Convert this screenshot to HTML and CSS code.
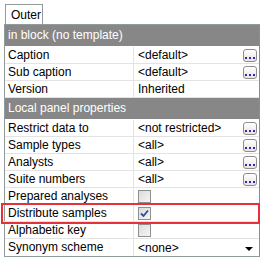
FILE: index.html
```html
<!DOCTYPE html>
<html lang="en">
  <head>
    <meta charset="UTF-8">
    <title>Outer</title>
    <link rel="stylesheet" href="styles.css">
  </head>
  <body>
    <div class="frame">
      <div class="tabs">
        <span class="tab">Outer</span>
      </div>
      <div class="panel">
        <div class="group">in block (no template)</div>
        <div class="row">
          <span class="label">Caption</span>
          <span class="value">&lt;default&gt;<span class="more"><svg width="10" height="3" viewBox="0 0 10 3"><rect x="0" y="0" width="2" height="2"/><rect x="4" y="0" width="2" height="2"/><rect x="8" y="0" width="2" height="2"/></svg></span></span>
        </div>
        <div class="row">
          <span class="label">Sub caption</span>
          <span class="value">&lt;default&gt;<span class="more"><svg width="10" height="3" viewBox="0 0 10 3"><rect x="0" y="0" width="2" height="2"/><rect x="4" y="0" width="2" height="2"/><rect x="8" y="0" width="2" height="2"/></svg></span></span>
        </div>
        <div class="row">
          <span class="label">Version</span>
          <span class="value">Inherited</span>
        </div>
        <div class="group">Local panel properties</div>
        <div class="row">
          <span class="label">Restrict data to</span>
          <span class="value">&lt;not restricted&gt;<span class="more"><svg width="10" height="3" viewBox="0 0 10 3"><rect x="0" y="0" width="2" height="2"/><rect x="4" y="0" width="2" height="2"/><rect x="8" y="0" width="2" height="2"/></svg></span></span>
        </div>
        <div class="row">
          <span class="label">Sample types</span>
          <span class="value">&lt;all&gt;<span class="more"><svg width="10" height="3" viewBox="0 0 10 3"><rect x="0" y="0" width="2" height="2"/><rect x="4" y="0" width="2" height="2"/><rect x="8" y="0" width="2" height="2"/></svg></span></span>
        </div>
        <div class="row">
          <span class="label">Analysts</span>
          <span class="value">&lt;all&gt;<span class="more"><svg width="10" height="3" viewBox="0 0 10 3"><rect x="0" y="0" width="2" height="2"/><rect x="4" y="0" width="2" height="2"/><rect x="8" y="0" width="2" height="2"/></svg></span></span>
        </div>
        <div class="row">
          <span class="label">Suite numbers</span>
          <span class="value">&lt;all&gt;<span class="more"><svg width="10" height="3" viewBox="0 0 10 3"><rect x="0" y="0" width="2" height="2"/><rect x="4" y="0" width="2" height="2"/><rect x="8" y="0" width="2" height="2"/></svg></span></span>
        </div>
        <div class="row">
          <span class="label">Prepared analyses</span>
          <span class="value"><span class="check"></span></span>
        </div>
        <div class="row row--marked">
          <span class="label">Distribute samples</span>
          <span class="value"><span class="check"><svg width="9" height="9" viewBox="0 0 9 9"><path d="M1 4.5 L3.5 7 L8 1.5" fill="none" stroke="#2a4f9c" stroke-width="1.8"/></svg></span></span>
        </div>
        <div class="row">
          <span class="label">Alphabetic key</span>
          <span class="value"><span class="check"></span></span>
        </div>
        <div class="row">
          <span class="label">Synonym scheme</span>
          <span class="value">&lt;none&gt;<span class="drop"></span></span>
        </div>
      </div>
    </div>
  </body>
</html>
```
FILE: styles.css
```css
html {
  background-color: #FFF;
}
body {
  margin: 0;
  font-family: "Liberation Sans", Arial, sans-serif;
  font-size: 12px;
  color: #000;
}
.frame {
  padding: 4px 3px 4px 4px;
}
.tabs {
  display: flex;
  height: 20px;
}
.tab {
  margin-left: 1px;
  width: 38px;
  border: 1px solid #919B9C;
  border-bottom: none;
  padding: 3px 0 0 5px;
  box-sizing: border-box;
  background: #FFF;
}
.panel {
  border: 1px solid #919B9C;
  border-right-color: #8C8C8C;
}
.group {
  height: 21px;
  line-height: 21px;
  background-color: #878787;
  color: #FFF;
  padding-left: 3px;
  border-bottom: 1px solid #FFF;
}
.row {
  display: flex;
  height: 16px;
  border-bottom: 1px solid #E3E3E3;
  line-height: 16px;
}
.row:last-child {
  border-bottom: none;
  height: 17px;
}
.row--marked {
  outline: 2px solid #E5313B;
  outline-offset: 0;
  margin: 0 0 0 -2px;
  padding-left: 2px;
  width: 253px;
}
.label {
  width: 125px;
  padding-left: 3px;
  border-right: 1px solid #E3E3E3;
  white-space: nowrap;
}
.value {
  flex: 1;
  display: flex;
  align-items: center;
  padding-left: 4px;
  padding-right: 2px;
}
.more {
  margin-left: auto;
  width: 14px;
  height: 13px;
  box-sizing: border-box;
  border: 1px solid #8D8D8D;
  border-radius: 3px;
  background: linear-gradient(#FFF, #E4E4E4);
  display: flex;
  align-items: flex-end;
  justify-content: center;
  padding-bottom: 1px;
}
.more svg {
  fill: #4A1FA8;
}
.check {
  width: 13px;
  height: 13px;
  box-sizing: border-box;
  border: 1px solid #8E8F8F;
  background: linear-gradient(135deg, #DCDCDC, #F5F5F5);
  display: flex;
  align-items: center;
  justify-content: center;
}
.drop {
  margin-left: auto;
  margin-right: 4px;
  margin-top: 3px;
  width: 0;
  height: 0;
  border-left: 4px solid transparent;
  border-right: 4px solid transparent;
  border-top: 4px solid #000;
}
```
